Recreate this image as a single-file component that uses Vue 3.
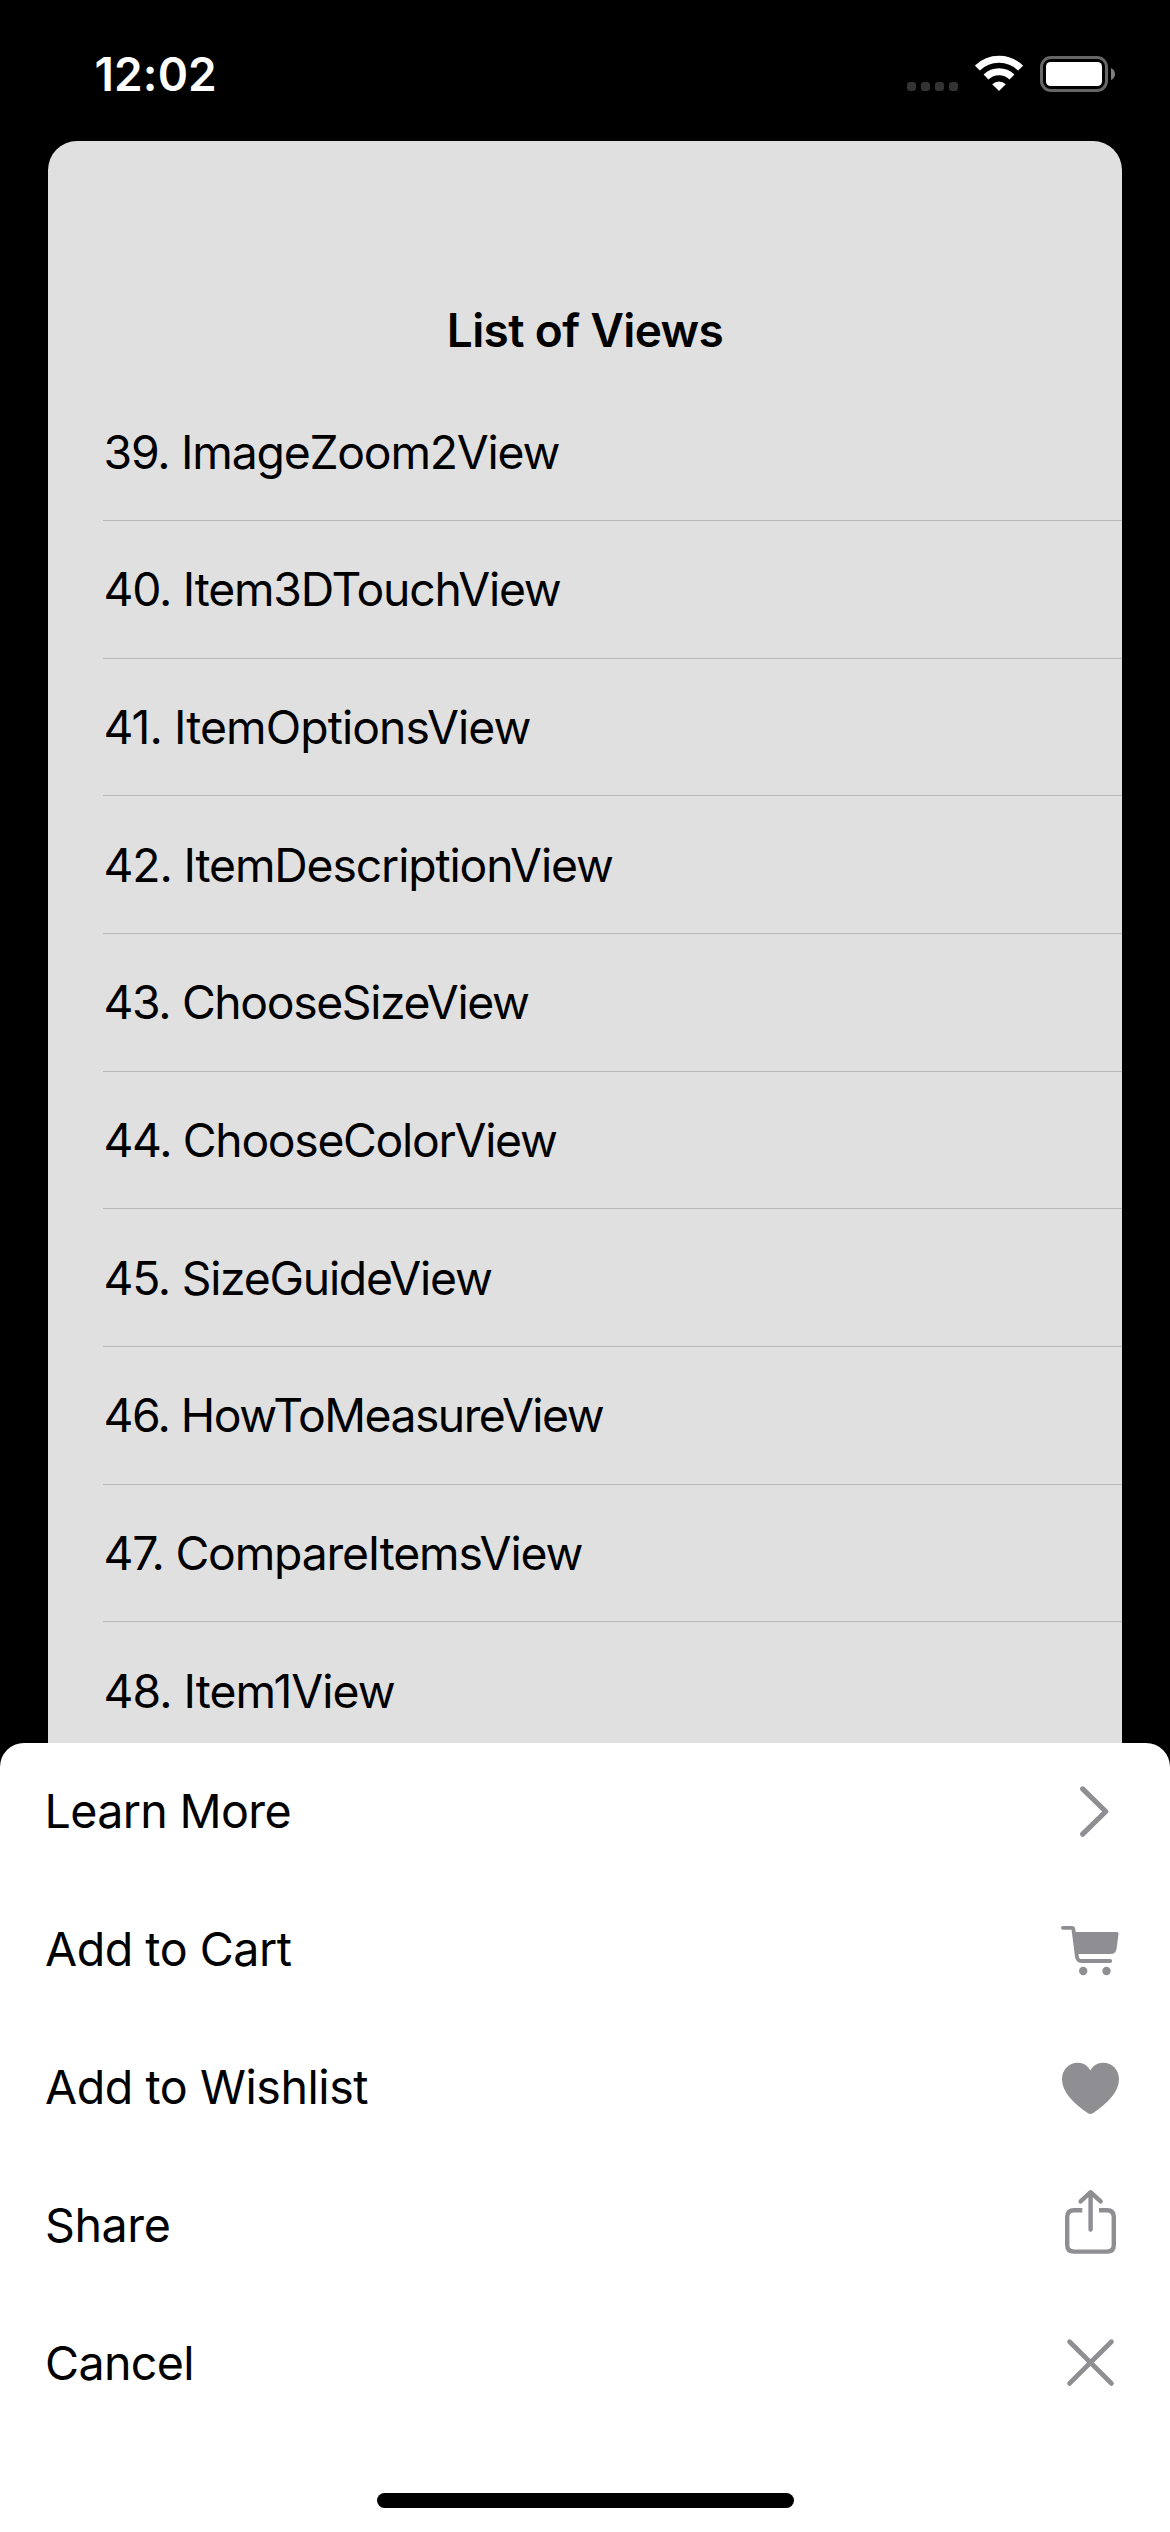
<script setup>
const views = [
  { label: '39. ImageZoom2View', tracking: -1.217 },
  { label: '40. Item3DTouchView', tracking: -1.231 },
  { label: '41. ItemOptionsView', tracking: -0.912 },
  { label: '42. ItemDescriptionView', tracking: -1.127 },
  { label: '43. ChooseSizeView', tracking: -1.36 },
  { label: '44. ChooseColorView', tracking: -1.314 },
  { label: '45. SizeGuideView', tracking: -1.249 },
  { label: '46. HowToMeasureView', tracking: -1.515 },
  { label: '47. CompareItemsView', tracking: -1.177 },
  { label: '48. Item1View', tracking: -0.936 },
]

const actions = [
  { label: 'Learn More', icon: 'chevron', tracking: -0.658 },
  { label: 'Add to Cart', icon: 'cart', tracking: -0.491 },
  { label: 'Add to Wishlist', icon: 'heart', tracking: -0.453 },
  { label: 'Share', icon: 'share', tracking: -0.419 },
  { label: 'Cancel', icon: 'close', tracking: -0.642 },
]
</script>

<template>
  <div class="screen">
    <header class="status">
      <span class="time">12:02</span>
      <div class="indicators">
        <div class="dots"><i v-for="n in 4" :key="n"></i></div>
        <svg class="wifi" viewBox="0 0 48 36" width="48" height="36">
          <g fill="none" stroke="#fff" stroke-width="7">
            <path d="M2.4 13.1 A31 31 0 0 1 45.6 13.1" />
            <path d="M11 22 A18.6 18.6 0 0 1 37 22" />
          </g>
          <path d="M24 36 L17.2 29.2 A10 10 0 0 1 30.8 29.2 Z" fill="#fff" />
        </svg>
        <svg class="battery" viewBox="0 0 75 36" width="75" height="36">
          <rect x="1.5" y="1.5" width="65" height="33" rx="9.5" fill="none" stroke="#666" stroke-width="3" />
          <rect x="6" y="6" width="56" height="24" rx="4.5" fill="#fff" />
          <path d="M71 12 Q75 14 75 18 Q75 22 71 24 Z" fill="#808080" />
        </svg>
      </div>
    </header>

    <main class="card">
      <h1 class="title">List of Views</h1>
      <ul class="views">
        <li v-for="v in views" :key="v.label" class="view">
          <span :style="{ letterSpacing: v.tracking + 'px' }">{{ v.label }}</span>
        </li>
      </ul>
    </main>

    <section class="sheet">
      <button v-for="a in actions" :key="a.label" class="action" type="button">
        <span class="label" :style="{ letterSpacing: a.tracking + 'px' }">{{ a.label }}</span>
        <svg class="icon" viewBox="0 0 80 80" width="80" height="80">
          <path v-if="a.icon === 'chevron'" class="line" stroke-width="5.2" d="M32.6 16.9 L55.8 39.5 L32.6 62.2" />
          <template v-else-if="a.icon === 'cart'">
            <path class="line" stroke-width="3.8" d="M12.9 17.8 H21.8 Q23.2 17.8 23.4 19.2 L26.9 46.5 Q27.5 51 31.5 51 H60.2" />
            <path fill="currentColor" d="M24 22 H67 Q68.8 22 68.5 24 L66.6 38.5 Q65.8 44 60.5 44 H27 Z" />
            <circle cx="33.2" cy="61" r="4.2" fill="currentColor" />
            <circle cx="56.5" cy="61" r="4.2" fill="currentColor" />
          </template>
          <path
            v-else-if="a.icon === 'heart'"
            fill="currentColor"
            d="M40.4 22.4 C43 17.6 47.4 14.7 53 14.7 C62.4 14.7 69 21.8 69 31.4 C69 43.5 57.6 55.4 42.8 65.2 Q40.4 66.6 38 65.2 C23.4 55.4 12 43.5 12 31.4 C12 21.8 18.6 14.7 28 14.7 C33.4 14.7 37.8 17.6 40.4 22.4 Z"
          />
          <template v-else-if="a.icon === 'share'">
            <path class="line" stroke-width="4.4" d="M40.6 43.6 V6.4 M30.6 15.4 L40.6 6.2 L50.6 15.4" />
            <path class="line butt" stroke-width="4.4" d="M32.3 24.2 H24 Q17.2 24.2 17.2 31 V59 Q17.2 65.6 24 65.6 H57 Q63.8 65.6 63.8 59 V31 Q63.8 24.2 57 24.2 H49" />
          </template>
          <path v-else class="line" stroke-width="4.8" d="M19.6 17.7 L61.4 59.4 M61.4 17.7 L19.6 59.4" />
        </svg>
      </button>
      <div class="home-indicator"></div>
    </section>
  </div>
</template>

<style>
body {
  margin: 0;
  background: #000;
}
</style>

<style scoped>
.screen {
  width: 1170px;
  height: 2532px;
  display: flex;
  flex-direction: column;
  overflow: hidden;
  background: #000;
  color: #000;
  font-family: Inter, "Liberation Sans", sans-serif;
}
.status {
  flex: none;
  box-sizing: border-box;
  height: 141px;
  padding: 46px 55px 0 94.5px;
  display: flex;
  justify-content: space-between;
  align-items: flex-start;
  color: #fff;
}
.time {
  font-size: 46px;
  font-weight: 600;
  line-height: 56px;
  letter-spacing: 0.12px;
}
.indicators {
  display: flex;
  align-items: flex-start;
  padding-top: 9px;
}
.dots {
  display: flex;
  gap: 5px;
  margin: 27px 17px 0 0;
}
.dots i {
  width: 9px;
  height: 9px;
  border-radius: 3px;
  background: #333;
}
.wifi {
  margin-right: 17px;
}
.battery {
  margin-top: 1px;
}
.card {
  flex: none;
  box-sizing: border-box;
  height: 1602px;
  margin: 0 48px;
  padding-top: 137px;
  background: #e0e0e0;
  border-radius: 29px 29px 0 0;
  overflow: hidden;
}
.title {
  margin: 0;
  height: 105.3px;
  line-height: 105px;
  text-align: center;
  font-size: 46px;
  font-weight: 600;
  letter-spacing: -0.63px;
}
.views {
  list-style: none;
  margin: 0 0 0 55px;
  padding: 0;
}
.view {
  box-sizing: border-box;
  height: 137.69px;
  display: flex;
  align-items: center;
  border-bottom: 1px solid #b8b8b9;
  font-size: 46.3px;
  line-height: 56px;
  white-space: nowrap;
}
.view span {
  padding-left: 0.5px;
}
.sheet {
  flex: none;
  height: 789px;
  display: flex;
  flex-direction: column;
  background: #fff;
  border-radius: 24px 24px 0 0;
  /* black shows behind the rounded corners, as the card is inset from them */
  position: relative;
}
.action {
  flex: none;
  height: 138px;
  padding: 0 40px 0 45px;
  display: flex;
  justify-content: space-between;
  align-items: center;
  border: 0;
  background: none;
  color: inherit;
  font: 400 46.6px/56px Inter, "Liberation Sans", sans-serif;
}
.label {
  padding-bottom: 2px;
}
.action:first-child .label {
  margin-left: -0.5px;
}
.icon {
  color: #8e8e93;
  overflow: visible;
}
.line {
  fill: none;
  stroke: currentColor;
  stroke-linecap: round;
  stroke-linejoin: round;
}
.butt {
  stroke-linecap: butt;
}
.home-indicator {
  width: 417px;
  height: 15px;
  margin: 60px auto 0;
  border-radius: 8px;
  background: #000;
}
</style>
